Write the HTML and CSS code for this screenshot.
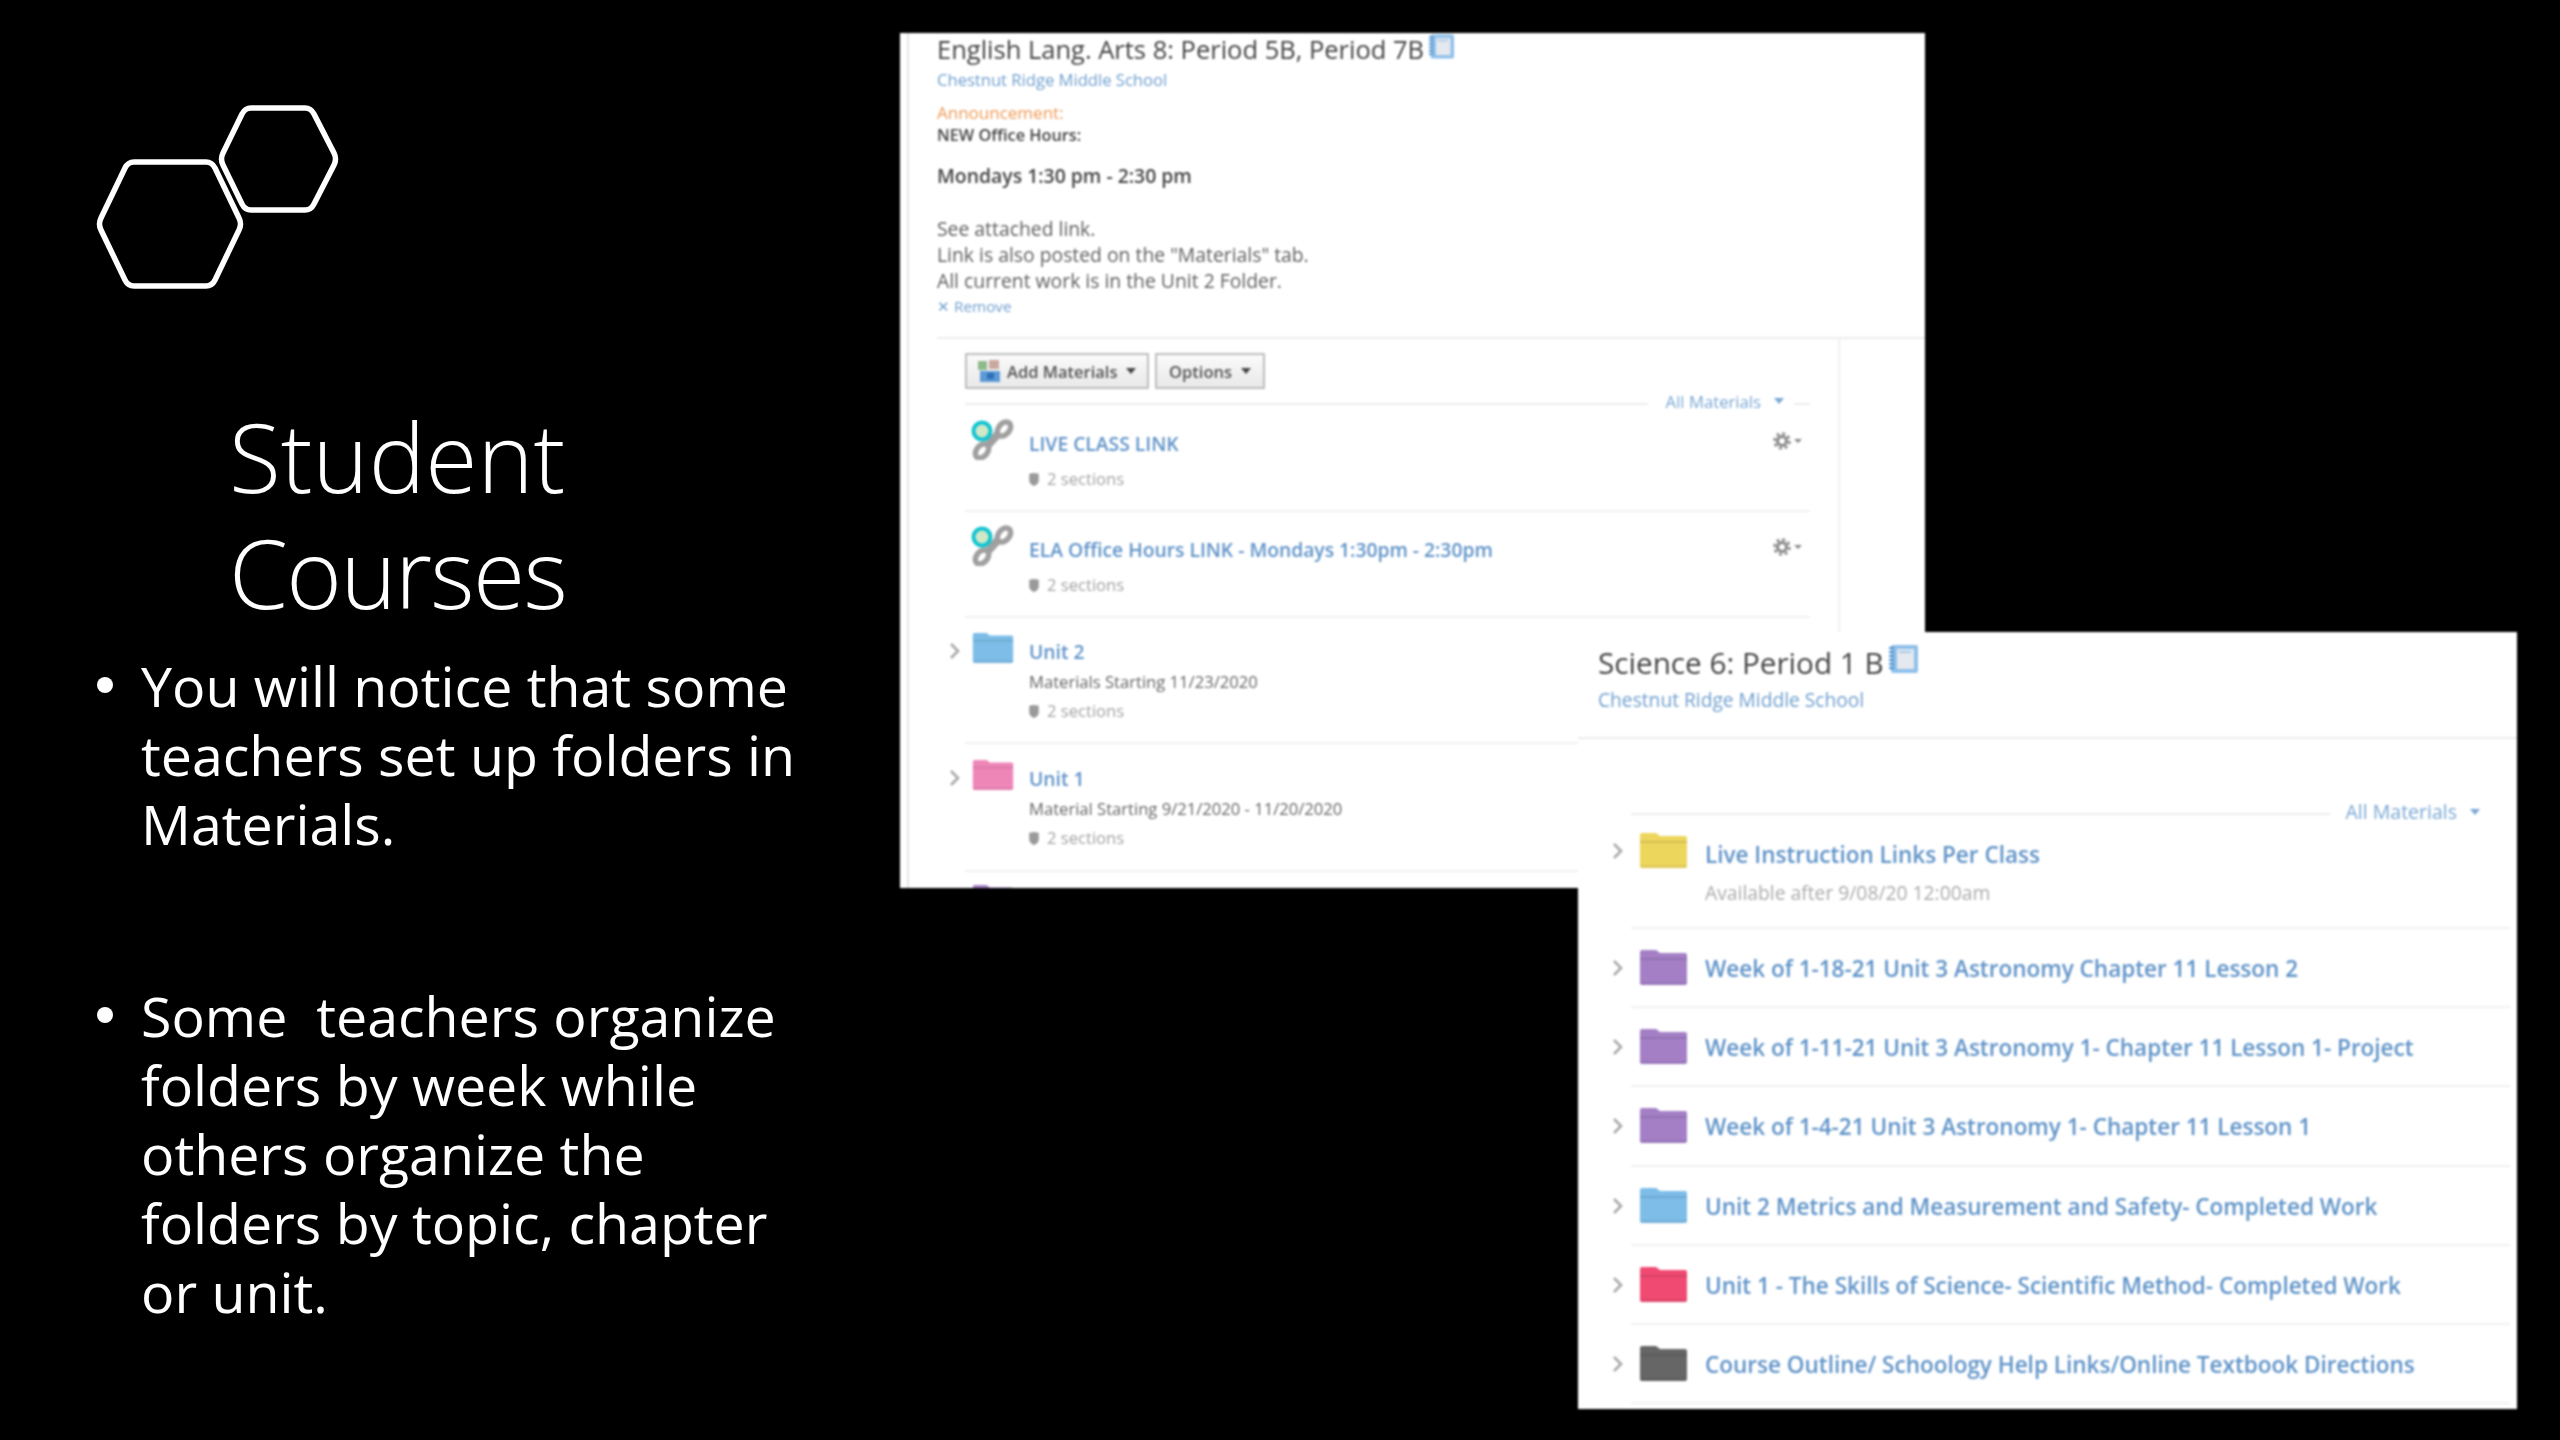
FILE: index.html
```html
<!DOCTYPE html>
<html lang="en">
<head>
<meta charset="utf-8">
<title>Student Courses</title>
<link rel="stylesheet" href="styles.css">
</head>
<body>
<svg class="defs" width="0" height="0" aria-hidden="true">
  <symbol id="folder" viewBox="0 0 47 35">
    <path fill="currentColor" d="M2 0h14l4 3h25a2 2 0 0 1 2 2v28a2 2 0 0 1-2 2H2a2 2 0 0 1-2-2V2a2 2 0 0 1 2-2z"/>
    <path fill="#000" opacity=".1" d="M0 8h47v2H0z"/>
    <path fill="#000" opacity=".06" d="M0 32h47v1a2 2 0 0 1-2 2H2a2 2 0 0 1-2-2z"/>
  </symbol>
  <symbol id="chev" viewBox="0 0 12 18"><path d="M2 2l7 7-7 7" fill="none" stroke="#a9a9a9" stroke-width="2.6"/></symbol>
  <symbol id="book" viewBox="0 0 29 28">
    <rect x="2" y="0" width="27" height="28" rx="2" fill="#8fc0ea"/>
    <rect x="8" y="4" width="17" height="20" fill="#e4e9ef"/>
    <rect x="10" y="6" width="12" height="2" fill="#a9c9e8"/>
    <path d="M0 3h5M0 7h5M0 11h5M0 15h5M0 19h5M0 23h5" stroke="#4c8fcb" stroke-width="2"/>
  </symbol>
  <symbol id="chain" viewBox="0 0 44 41">
    <g fill="none" stroke="#a0a0a0" stroke-width="5.500">
      <ellipse cx="33" cy="10" rx="5.500" ry="8" transform="rotate(40 33 10)"/>
      <ellipse cx="11" cy="32" rx="5.500" ry="8" transform="rotate(40 11 32)"/>
      <path d="M27 15l-10 11" stroke-width="8"/>
    </g>
    <circle cx="11" cy="12" r="8.500" fill="#cfe8c8" stroke="#14c4cf" stroke-width="4"/>
  </symbol>
  <symbol id="shield" viewBox="0 0 11 15"><path fill="#9a9a9a" d="M0 1l5.500-1 5.500 1v8c0 3-3 5-5.500 6C3 14 0 12 0 9z"/></symbol>
  <symbol id="gear" viewBox="0 0 18 18">
    <circle cx="9" cy="9" r="4.500" fill="none" stroke="#8a8a8a" stroke-width="3"/>
    <circle cx="9" cy="9" r="7.500" fill="none" stroke="#8a8a8a" stroke-width="2.600" stroke-dasharray="3 2.890"/>
  </symbol>
</svg>

<main class="slide">
  <section class="intro">
    <svg class="logo" viewBox="0 0 243 184" aria-hidden="true">
      <path class="hex" d="M127 48L146 9Q149 3 155 3L209 3Q215 3 218 9L238 48Q241 54 238 60L218 99Q215 105 209 105L155 105Q149 105 146 99L127 60Q124 54 127 48Z"/>
      <path class="hex" d="M5 113L29 63Q32 57 38 57L110 57Q116 57 119 63L143 113Q146 119 143 125L119 175Q116 181 110 181L38 181Q32 181 29 175L5 125Q2 119 5 113Z"/>
    </svg>
    <h1 class="title">Student<br><span class="title-tight">Courses</span></h1>
    <ul class="points">
      <li>You will notice that some teachers set up folders in Materials.</li>
      <li>Some&nbsp; teachers organize folders by week while others organize the folders by topic, chapter or unit.</li>
    </ul>
  </section>

  <article class="shot shot-ela">
    <div class="page">
      <header class="ela-head">
        <h2 class="ela-title">English Lang. Arts 8: Period 5B, Period 7B <svg class="book"><use href="#book"/></svg></h2>
        <a class="school">Chestnut Ridge Middle School</a>
        <p class="ann-label">Announcement:</p>
        <p class="ann-strong">NEW Office Hours:</p>
        <p class="ann-time">Mondays 1:30 pm - 2:30 pm</p>
        <p class="ann-text ann-first">See attached link.</p>
        <p class="ann-text">Link is also posted on the "Materials" tab.</p>
        <p class="ann-text">All current work is in the Unit 2 Folder.</p>
        <a class="remove">✕ Remove</a>
      </header>
      <div class="mat">
        <div class="toolbar">
          <button class="btn"><svg class="btn-ico" viewBox="0 0 24 24"><rect x="1" y="2" width="9" height="9" fill="#8fb98a"/><rect x="12" y="1" width="10" height="9" fill="#c9a8a0"/><rect x="3" y="12" width="20" height="11" fill="#5b9ad6"/><rect x="10" y="14" width="7" height="6" fill="#2f6fb8"/></svg>Add Materials<i class="caret"></i></button>
          <button class="btn btn-opt">Options<i class="caret"></i></button>
        </div>
        <div class="filter filter-ela"><span class="rule"></span><span class="filter-label">All Materials<i class="caret caret-blue"></i></span><span class="rule rule-end"></span></div>

        <div class="row row-first">
          <div class="chev-slot"></div>
          <svg class="chain"><use href="#chain"/></svg>
          <div class="body"><a class="link">LIVE CLASS LINK</a><p class="sections"><svg class="shield"><use href="#shield"/></svg>2 sections</p></div>
          <div class="gear-wrap"><svg class="gear"><use href="#gear"/></svg><i class="caret caret-gear"></i></div>
        </div>
        <div class="row row-link">
          <div class="chev-slot"></div>
          <svg class="chain"><use href="#chain"/></svg>
          <div class="body"><a class="link">ELA Office Hours LINK - Mondays 1:30pm - 2:30pm</a><p class="sections"><svg class="shield"><use href="#shield"/></svg>2 sections</p></div>
          <div class="gear-wrap"><svg class="gear"><use href="#gear"/></svg><i class="caret caret-gear"></i></div>
        </div>
        <div class="row row-unit2">
          <div class="chev-slot"><svg class="chev"><use href="#chev"/></svg></div>
          <svg class="folder c-sky"><use href="#folder"/></svg>
          <div class="body body-folder"><a class="link">Unit 2</a><p class="meta">Materials Starting 11/23/2020</p><p class="sections sections-tight"><svg class="shield"><use href="#shield"/></svg>2 sections</p></div>
        </div>
        <div class="row row-unit1">
          <div class="chev-slot"><svg class="chev"><use href="#chev"/></svg></div>
          <svg class="folder c-pink"><use href="#folder"/></svg>
          <div class="body body-folder"><a class="link">Unit 1</a><p class="meta">Material Starting 9/21/2020 - 11/20/2020</p><p class="sections sections-tight"><svg class="shield"><use href="#shield"/></svg>2 sections</p></div>
        </div>
        <div class="row row-peek">
          <div class="chev-slot"></div>
          <svg class="folder c-violet"><use href="#folder"/></svg>
        </div>
      </div>
    </div>
  </article>

  <article class="shot shot-sci">
    <header class="sci-head">
      <h2 class="sci-title">Science 6: Period 1 B <svg class="book book-lg"><use href="#book"/></svg></h2>
      <a class="school school-lg">Chestnut Ridge Middle School</a>
    </header>
    <div class="filter filter-sci"><span class="rule"></span><span class="filter-label filter-label-lg">All Materials<i class="caret caret-blue"></i></span></div>
    <ul class="folders">
      <li class="f-row f-first"><svg class="chev chev-lg"><use href="#chev"/></svg><svg class="folder-lg c-yellow"><use href="#folder"/></svg><div class="f-body"><a class="f-link">Live Instruction Links Per Class</a><p class="f-meta">Available after 9/08/20 12:00am</p></div></li>
      <li class="f-row"><svg class="chev chev-lg"><use href="#chev"/></svg><svg class="folder-lg c-violet"><use href="#folder"/></svg><div class="f-body"><a class="f-link">Week of 1-18-21 Unit 3 Astronomy Chapter 11 Lesson 2</a></div></li>
      <li class="f-row"><svg class="chev chev-lg"><use href="#chev"/></svg><svg class="folder-lg c-violet"><use href="#folder"/></svg><div class="f-body"><a class="f-link">Week of 1-11-21 Unit 3 Astronomy 1- Chapter 11 Lesson 1- Project</a></div></li>
      <li class="f-row"><svg class="chev chev-lg"><use href="#chev"/></svg><svg class="folder-lg c-violet"><use href="#folder"/></svg><div class="f-body"><a class="f-link">Week of 1-4-21 Unit 3 Astronomy 1- Chapter 11 Lesson 1</a></div></li>
      <li class="f-row"><svg class="chev chev-lg"><use href="#chev"/></svg><svg class="folder-lg c-sky"><use href="#folder"/></svg><div class="f-body"><a class="f-link">Unit 2 Metrics and Measurement and Safety- Completed Work</a></div></li>
      <li class="f-row"><svg class="chev chev-lg"><use href="#chev"/></svg><svg class="folder-lg c-red"><use href="#folder"/></svg><div class="f-body"><a class="f-link">Unit 1 - The Skills of Science- Scientific Method- Completed Work</a></div></li>
      <li class="f-row"><svg class="chev chev-lg"><use href="#chev"/></svg><svg class="folder-lg c-dark"><use href="#folder"/></svg><div class="f-body"><a class="f-link">Course Outline/ Schoology Help Links/Online Textbook Directions</a></div></li>
    </ul>
  </article>
</main>
</body>
</html>
```

FILE: styles.css
```css
* { box-sizing: border-box; }
html, body { margin: 0; padding: 0; background: #000; }
.defs { position: absolute; }
p, h1, h2, ul { margin: 0; padding: 0; font-weight: inherit; font-size: inherit; }
svg { display: block; flex: none; }

.slide { position: relative; width: 2560px; height: 1440px; overflow: hidden; background: #000; }

/* Left column */
.intro { width: 880px; padding: 105px 0 0 96px; color: #fff; font-family: "Open Sans", "Liberation Sans", sans-serif; filter: blur(.4px); }
.logo { width: 243px; height: 184px; }
.hex { fill: none; stroke: #fff; stroke-width: 5.500; }
.title { margin: 109px 0 21px 133px; font-weight: 300; font-size: 95px; line-height: 116px; }
.title-tight { letter-spacing: -1.600px; }
.points { list-style: none; width: 725px; font-size: 55.500px; line-height: 69px; padding-left: 45px; }
.points li { position: relative; margin-bottom: 123px; }
.points li::before { content: ""; position: absolute; left: -44px; top: 26px; width: 16px; height: 16px; border-radius: 50%; background: #fff; }

/* Screenshots on the slide */
.shot { position: absolute; overflow: hidden; background: #fff; font-family: "Open Sans", "Liberation Sans", sans-serif; color: #555; filter: blur(.8px); }
.shot-ela { left: 900px; top: 33px; width: 1025px; height: 855px; padding-left: 7px; }
.shot-sci { left: 1578px; top: 632px; width: 939px; height: 777px; }
.page { height: 100%; border-left: 2px solid #e6e6e6; }

/* ELA header */
.ela-head { margin-left: 28px; padding-bottom: 20px; border-bottom: 2px solid #ececec; height: 306px; }
.ela-head p { white-space: nowrap; }
.ela-title { display: flex; align-items: center; gap: 5px; font-size: 25.500px; line-height: 32px; font-weight: 500; color: #444; white-space: nowrap; }
.book { width: 25px; height: 25px; margin-top: -6px; }
.book-lg { width: 29px; height: 28px; margin-top: -8px; }
.school { display: block; margin-top: 4px; font-size: 16.600px; line-height: 22px; color: #6f9fcf; white-space: nowrap; }
.ann-label { margin-top: 11px; font-size: 17px; line-height: 22px; color: #ee9a55; }
.ann-strong { font-size: 16.300px; line-height: 22px; font-weight: 600; color: #444; }
.ann-time { margin-top: 17px; font-size: 19.400px; line-height: 26px; font-weight: 600; color: #444; }
.ann-text { font-size: 19.350px; line-height: 26px; color: #5f5f5f; }
.ann-first { margin-top: 27px; }
.remove { display: block; font-size: 15.300px; line-height: 24px; color: #6f9fcf; }

/* Materials */
.mat { width: 931px; height: 560px; padding: 14px 28px 0 56px; border-right: 2px solid #efefef; }
.toolbar { display: flex; gap: 6px; height: 36px; margin-bottom: 4px; }
.btn { display: flex; align-items: center; width: 184px; height: 36px; padding: 0 0 0 10px; border: 2px solid #bdbdbd; border-radius: 1px; background: linear-gradient(#fafafa, #e9e9e9); font: 600 16.500px "Open Sans", sans-serif; color: #555; white-space: nowrap; }
.btn-opt { width: 110px; padding-left: 12px; }
.btn-ico { width: 24px; height: 24px; margin-right: 6px; }
.caret { display: inline-block; flex: none; width: 0; height: 0; margin-left: 9px; border: 5px solid transparent; border-top: 6px solid #444; border-bottom: 0; }
.caret-blue { border-top-color: #7aa7d4; margin-left: 13px; vertical-align: 4px; }
.caret-gear { border-top-color: #888; margin: 0 0 0 3px; border-width: 4px 4px 0; }

.filter { display: flex; align-items: center; }
.filter-ela { height: 22px; }
.rule { flex: 1; height: 2px; background: #ececec; }
.rule-end { flex: none; width: 16px; margin-left: 10px; }
.filter-label { display: block; margin-left: 18px; font-size: 16.700px; line-height: 22px; color: #7aa7d4; white-space: nowrap; margin-top: -4px; }

.row { display: flex; align-items: flex-start; border-bottom: 2px solid #f1f1f1; margin-right: 0; }
.chev-slot { flex: none; width: 16px; margin-left: -16px; }
.chain { width: 44px; height: 41px; margin: 0 14px 0 6px; }
.folder { width: 42px; height: 30px; margin: 0 15px 0 7px; }
.body { flex: 1; padding-top: 12px; }
.body-folder { padding-top: 6px; }
.link { display: block; font-size: 19.300px; line-height: 26px; font-weight: 600; color: #5f93c8; white-space: nowrap; }
.sections { display: flex; align-items: center; gap: 8px; margin-top: 11px; font-size: 16.600px; line-height: 22px; color: #a3a3a3; }
.sections-tight { margin-top: 7px; }
.shield { width: 10px; height: 13px; }
.meta { margin-top: 6px; font-size: 16.600px; line-height: 22px; color: #666; white-space: nowrap; }
.gear-wrap { display: flex; align-items: center; gap: 0; margin: 13px 8px 0 0; }
.gear { width: 18px; height: 18px; }
.row-first { height: 97px; padding-top: 4px; }
.row-link { height: 106px; padding-top: 13px; }
.row-unit2 { height: 126px; padding-top: 15px; }
.row-unit1 { height: 128px; padding-top: 16px; }
.row-peek { padding-top: 13px; border: 0; }
.chev { width: 12px; height: 18px; margin-top: 9px; }

/* Folder colours */
.c-sky { color: #7dbde8; }
.c-pink { color: #ef86b8; }
.c-violet { color: #a47fc6; }
.c-yellow { color: #edd65c; }
.c-red { color: #f04a72; }
.c-dark { color: #666; }

/* Science window */
.sci-head { height: 107px; padding: 13px 0 0 20px; border-bottom: 2px solid #ececec; }
.sci-title { display: flex; align-items: center; gap: 5px; font-size: 29.700px; line-height: 36px; font-weight: 500; color: #444; white-space: nowrap; }
.school-lg { margin-top: 7px; font-size: 19.200px; line-height: 24px; }
.filter-sci { height: 28px; margin: 61px 37px 0 53px; }
.filter-label-lg { font-size: 19.500px; line-height: 28px; margin-left: 16px; }
.folders { list-style: none; margin: 0 7px 0 53px; }
.f-row { display: flex; align-items: flex-start; height: 79.200px; padding-top: 21px; border-bottom: 2px solid #f1f1f1; }
.f-first { height: 101px; padding-top: 5px; }
.chev-lg { width: 12px; height: 18px; margin: 9px 16px 0 -19px; }
.folder-lg { width: 47px; height: 35px; margin-right: 18px; }
.f-body { padding-top: 4px; }
.f-first .f-body { padding-top: 7px; }
.f-link { display: block; font-size: 22.500px; line-height: 30px; font-weight: 600; color: #5f93c8; white-space: nowrap; }
.f-meta { margin-top: 11px; font-size: 19.300px; line-height: 24px; color: #ababab; white-space: nowrap; }
```
